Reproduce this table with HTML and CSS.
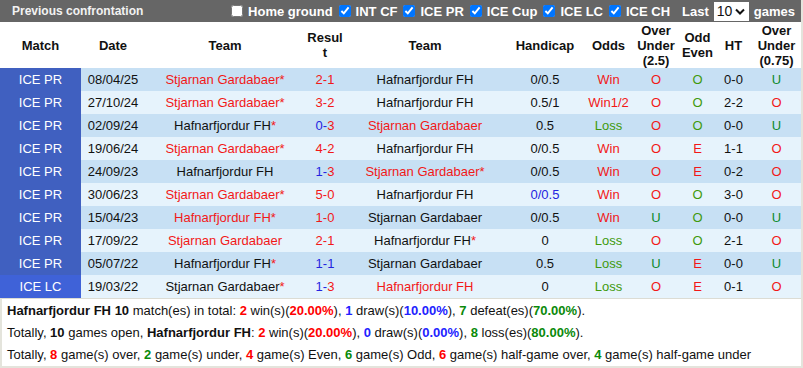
FILE: index.html
```html
<!DOCTYPE html>
<html lang="en">
<head>
    <meta charset="UTF-8">
    <title>Previous confrontation</title>
    <link rel="stylesheet" href="styles.css">
</head>
<body>
    <div class="box">
        <div class="titlebar">
            <span class="title">Previous confrontation</span>
            <div class="filters">
                <label><input type="checkbox"> Home ground</label>
                <label><input type="checkbox" checked> INT CF</label>
                <label><input type="checkbox" checked> ICE PR</label>
                <label><input type="checkbox" checked> ICE Cup</label>
                <label><input type="checkbox" checked> ICE LC</label>
                <label><input type="checkbox" checked> ICE CH</label>
                <span class="last">Last</span>
                <span class="select-box">
                    <select class="count"><option>10</option></select>
                    <svg width="10" height="7" viewBox="0 0 10 7"><path d="M1 1.5 L5 5.5 L9 1.5" fill="none" stroke="#111" stroke-width="2"/></svg>
                </span>
                <span>games</span>
            </div>
        </div>

        <table class="matches">
            <colgroup>
                <col style="width:81px"><col style="width:64px"><col style="width:160px"><col style="width:40px">
                <col style="width:160px"><col style="width:80px"><col style="width:47px"><col style="width:48px">
                <col style="width:35px"><col style="width:37px"><col style="width:49px">
            </colgroup>
            <thead>
                <tr>
                    <th>Match</th><th>Date</th><th>Team</th><th class="wrap">Result</th><th>Team</th><th>Handicap</th>
                    <th>Odds</th><th>Over Under (2.5)</th><th>Odd Even</th><th>HT</th><th>Over Under (0.75)</th>
                </tr>
            </thead>
            <tbody>
                <tr>
                    <td class="league">ICE PR</td><td>08/04/25</td><td class="red">Stjarnan Gardabaer*</td>
                    <td class="red">2-1</td><td>Hafnarfjordur FH</td><td>0/0.5</td><td class="red">Win</td>
                    <td class="red">O</td><td class="olive">O</td><td>0-0</td><td class="green">U</td>
                </tr>
                <tr>
                    <td class="league">ICE PR</td><td>27/10/24</td><td class="red">Stjarnan Gardabaer*</td>
                    <td class="red">3-2</td><td>Hafnarfjordur FH</td><td>0.5/1</td><td class="red">Win1/2</td>
                    <td class="red">O</td><td class="olive">O</td><td>2-2</td><td class="red">O</td>
                </tr>
                <tr>
                    <td class="league">ICE PR</td><td>02/09/24</td><td>Hafnarfjordur FH<span class="red">*</span></td>
                    <td><span class="blue">0-</span><span class="red">3</span></td><td class="red">Stjarnan Gardabaer</td><td>0.5</td><td class="olive">Loss</td>
                    <td class="red">O</td><td class="olive">O</td><td>0-0</td><td class="green">U</td>
                </tr>
                <tr>
                    <td class="league">ICE PR</td><td>19/06/24</td><td class="red">Stjarnan Gardabaer*</td>
                    <td class="red">4-2</td><td>Hafnarfjordur FH</td><td>0/0.5</td><td class="red">Win</td>
                    <td class="red">O</td><td class="red">E</td><td>1-1</td><td class="red">O</td>
                </tr>
                <tr>
                    <td class="league">ICE PR</td><td>24/09/23</td><td>Hafnarfjordur FH</td>
                    <td><span class="blue">1-</span><span class="red">3</span></td><td class="red">Stjarnan Gardabaer*</td><td>0/0.5</td><td class="red">Win</td>
                    <td class="red">O</td><td class="red">E</td><td>0-2</td><td class="red">O</td>
                </tr>
                <tr>
                    <td class="league">ICE PR</td><td>30/06/23</td><td class="red">Stjarnan Gardabaer*</td>
                    <td class="red">5-0</td><td>Hafnarfjordur FH</td><td class="blue">0/0.5</td><td class="red">Win</td>
                    <td class="red">O</td><td class="olive">O</td><td>3-0</td><td class="red">O</td>
                </tr>
                <tr>
                    <td class="league">ICE PR</td><td>15/04/23</td><td class="red">Hafnarfjordur FH*</td>
                    <td class="red">1-0</td><td>Stjarnan Gardabaer</td><td>0/0.5</td><td class="red">Win</td>
                    <td class="green">U</td><td class="olive">O</td><td>0-0</td><td class="green">U</td>
                </tr>
                <tr>
                    <td class="league">ICE PR</td><td>17/09/22</td><td class="red">Stjarnan Gardabaer</td>
                    <td class="red">2-1</td><td>Hafnarfjordur FH<span class="red">*</span></td><td>0</td><td class="olive">Loss</td>
                    <td class="red">O</td><td class="olive">O</td><td>2-1</td><td class="red">O</td>
                </tr>
                <tr>
                    <td class="league">ICE PR</td><td>05/07/22</td><td>Hafnarfjordur FH<span class="red">*</span></td>
                    <td class="blue">1-1</td><td>Stjarnan Gardabaer</td><td>0.5</td><td class="olive">Loss</td>
                    <td class="green">U</td><td class="red">E</td><td>0-0</td><td class="green">U</td>
                </tr>
                <tr>
                    <td class="league lc">ICE LC</td><td>19/03/22</td><td>Stjarnan Gardabaer<span class="red">*</span></td>
                    <td><span class="blue">1-</span><span class="red">3</span></td><td class="red">Hafnarfjordur FH</td><td>0</td><td class="olive">Loss</td>
                    <td class="red">O</td><td class="red">E</td><td>0-1</td><td class="red">O</td>
                </tr>
            </tbody>
        </table>

        <div class="summary">
            <p><b>Hafnarfjordur FH</b> <b>10</b> match(es) in total: <b class="red">2</b> win(s)(<b class="red">20.00%</b>), <b class="blue">1</b> draw(s)(<b class="blue">10.00%</b>), <b class="green">7</b> defeat(es)(<b class="green">70.00%</b>).</p>
            <p>Totally, <b>10</b> games open, <b>Hafnarfjordur FH</b>: <b class="red">2</b> win(s)(<b class="red">20.00%</b>), <b class="blue">0</b> draw(s)(<b class="blue">0.00%</b>), <b class="green">8</b> loss(es)(<b class="green">80.00%</b>).</p>
            <p>Totally, <b class="red">8</b> game(s) over, <b class="green">2</b> game(s) under, <b class="red">4</b> game(s) Even, <b class="green">6</b> game(s) Odd, <b class="red">6</b> game(s) half-game over, <b class="green">4</b> game(s) half-game under</p>
        </div>
    </div>
</body>
</html>
```

FILE: styles.css
```css
body {
    margin: 0;
    font-family: "Liberation Sans", Arial, sans-serif;
    font-size: 13px;
    color: #111;
    background: white;
}
.box {
    width: 801px;
    border-right: 2px solid #e4e4dc;
}
.titlebar {
    display: flex;
    align-items: center;
    height: 22px;
    background: #666;
    color: #f2f2f2;
    padding-left: 12px;
}
.title {
    font-size: 12px;
    font-weight: bold;
}
.filters {
    display: flex;
    align-items: center;
    margin-left: auto;
    padding-right: 6px;
    font-weight: bold;
    font-size: 13px;
    color: white;
}
.filters label {
    display: flex;
    align-items: center;
}
.filters input {
    width: 12px;
    height: 12px;
    margin: 0 5px 0 6px;
}
.last {
    margin-left: 12px;
}
.select-box {
    display: inline-flex;
    align-items: center;
    height: 19px;
    width: 35px;
    margin: 0 5px;
    padding: 0 4px 0 3px;
    box-sizing: border-box;
    background: white;
}
.count {
    appearance: none;
    -webkit-appearance: none;
    border: none;
    background: transparent;
    padding: 0;
    width: 18px;
    font-family: "Liberation Sans", Arial, sans-serif;
    font-size: 14px;
    color: #111;
}
.matches {
    width: 801px;
    table-layout: fixed;
    border-collapse: collapse;
}
.matches th {
    height: 46px;
    padding: 0;
    font-weight: bold;
    line-height: 15px;
    text-align: center;
    color: #111;
}
.matches th.wrap {
    word-break: break-all;
    padding: 0 2px;
}
.matches td {
    height: 23px;
    padding: 0;
    text-align: center;
    white-space: nowrap;
}
.matches tbody tr:nth-child(odd) {
    background: #c7e0f4;
}
.matches tbody tr:nth-child(even) {
    background: #e6f3fc;
}
.matches td.league {
    background: #4060c0;
    color: white;
}
.matches td.lc {
    background: #3f62d8;
}
.red {
    color: #f21818;
}
.blue {
    color: #2424e0;
}
.green {
    color: #0d8a2c;
}
.olive {
    color: #3f9a0c;
}
.summary {
    border-top: 1px solid #dcdcd4;
    border-left: 2px solid #e4e4dc;
    border-bottom: 2px solid #e4e4dc;
    padding: 1px 0 0 5px;
}
.summary p {
    margin: 0;
    line-height: 22px;
}
.summary .red {
    color: #f00;
}
.summary .blue {
    color: #2222ff;
}
.summary .green {
    color: #0a8a0a;
}
```
